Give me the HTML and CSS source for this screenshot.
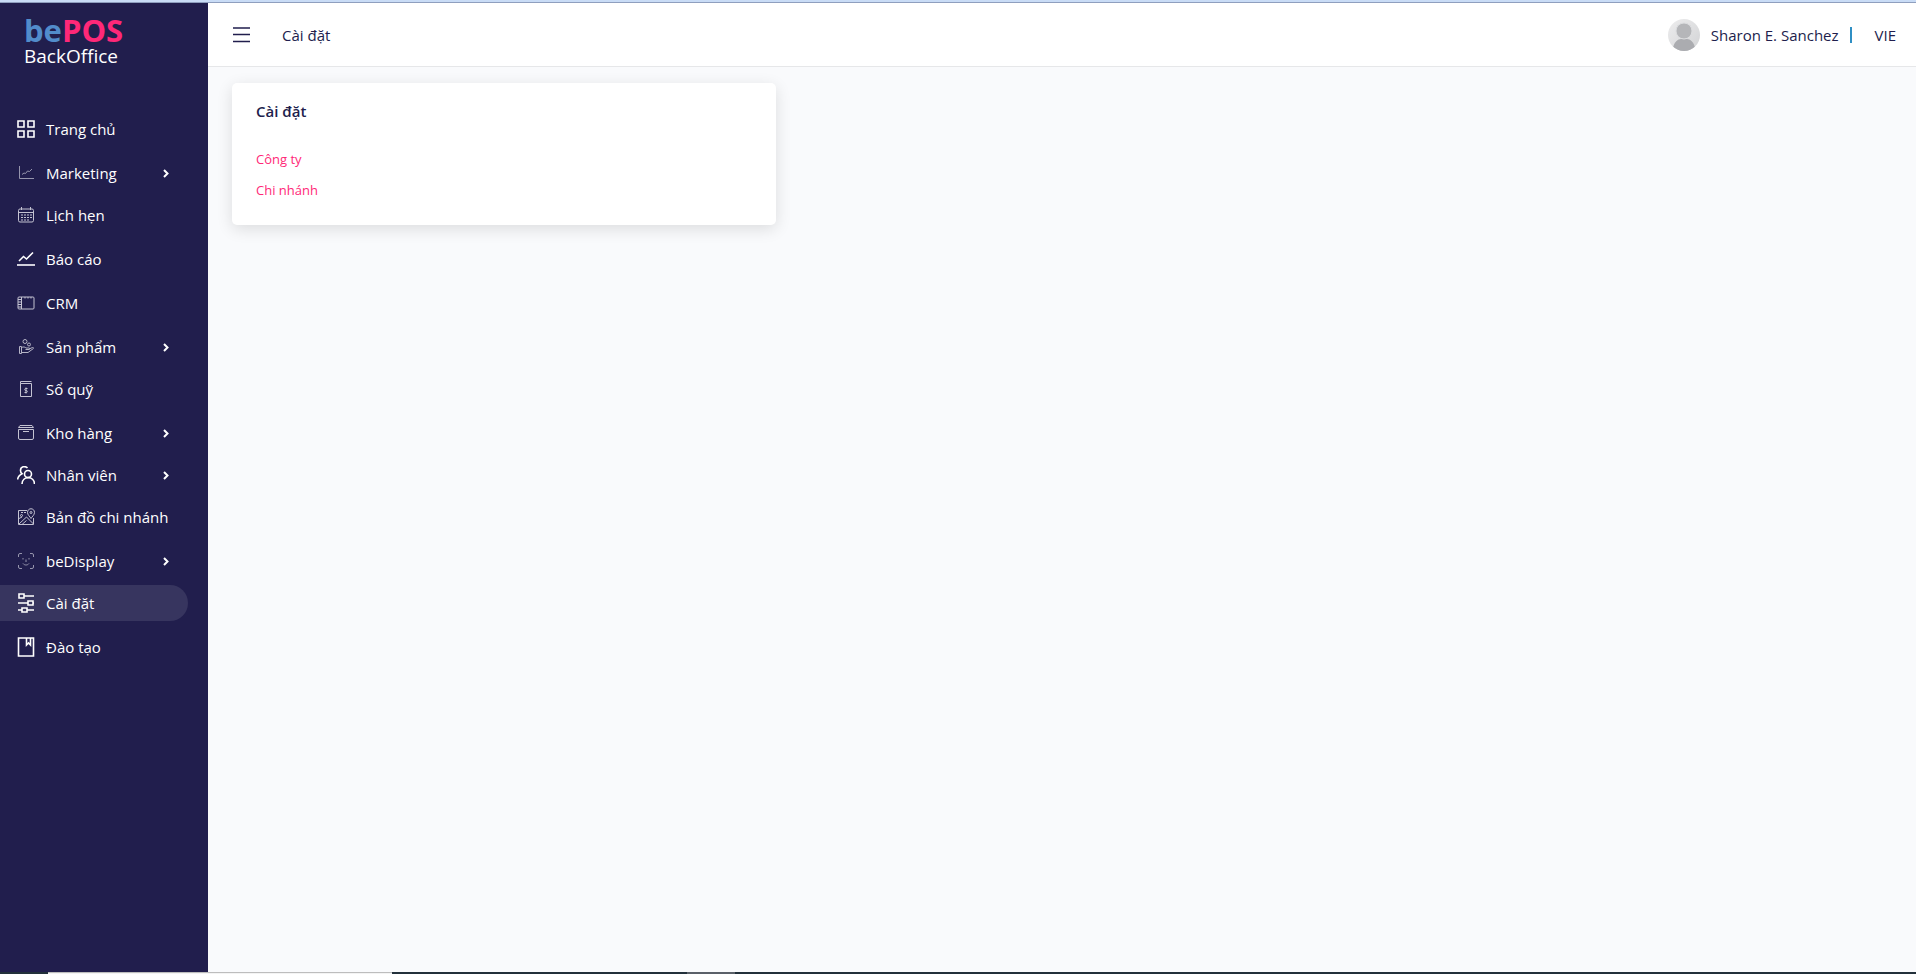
FILE: index.html
```html
<!DOCTYPE html>
<html lang="vi">
  <head>
    <meta charset="UTF-8" />
    <meta name="viewport" content="width=device-width, initial-scale=1.0" />
    <title>bePOS BackOffice</title>
    <link rel="stylesheet" href="styles.css">
  </head>
  <body>
    <div class="top-strip"></div>
    <div class="layout">
      <!-- sidebar -->
      <aside class="sidebar">
        <a class="logo" href="#">
          <span class="logo-name"><span class="logo-be">be</span>POS</span>
          <span class="logo-sub">BackOffice</span>
        </a>
        <nav class="menu">
          <a class="menu-item" href="#">
            <svg class="icon" viewBox="0 0 18 18"><path d="M1 1h6v6H1zM11 1h6v6h-6zM1 11h6v6H1zM11 11h6v6h-6z" /></svg>
            <span>Trang chủ</span>
          </a>
          <button class="menu-item has-sub" type="button">
            <svg class="icon thin" viewBox="0 0 18 18"><path d="M2.5 2v12.5H17M5 10.500l2-1.500 1.500.5 2-2.500 2 .5L15 5" /></svg>
            <span>Marketing</span>
            <svg class="chevron" viewBox="0 0 8 10"><path d="M2 2l3.500 3.500L2 9" /></svg>
          </button>
          <a class="menu-item" href="#">
            <svg class="icon soft" viewBox="0 0 18 18"><path d="M3 3h12q1.500 0 1.500 1.500v10q0 1.500-1.500 1.500H3q-1.500 0-1.500-1.500v-10Q1.500 3 3 3zM1.500 6.500h15M4.500 1v3M13.500 1v3" /><path stroke-dasharray="2 1" d="M4 9h11M4 11.500h11M4 14h8" /></svg>
            <span>Lịch hẹn</span>
          </a>
          <a class="menu-item" href="#">
            <svg class="icon" viewBox="0 0 18 18"><path d="M2 11l4.500-4.500 3 2.500L16 2.500" /><path class="base" d="M0 15h18" /></svg>
            <span>Báo cáo</span>
          </a>
          <a class="menu-item" href="#">
            <svg class="icon soft" viewBox="0 0 18 18"><rect x="1" y="3" width="16" height="12" rx="1" /><path d="M4.500 3v12M1 5.500h3M1 8h3M1 10.500h3M1 13h3M8 3v1.500M11 3v1.500M14 3v1.500" /></svg>
            <span>CRM</span>
          </a>
          <button class="menu-item has-sub" type="button">
            <svg class="icon hand" viewBox="0 0 18 18"><circle cx="8" cy="3.500" r="2" /><circle cx="12" cy="6.500" r="1.500" /><path d="M2.500 8.500h2v7h-2zM4.500 9.500c2-1 3.500-.5 4.500.5h3c1 0 1 1.500 0 1.500H8.500M12 11l3.500-1.500c1-.3 1.500.8.5 1.300L11 14.500H4.500" /></svg>
            <span>Sản phẩm</span>
            <svg class="chevron" viewBox="0 0 8 10"><path d="M2 2l3.500 3.500L2 9" /></svg>
          </button>
          <a class="menu-item" href="#">
            <svg class="icon soft" viewBox="0 0 18 18"><path d="M3.500 3.500h11v13h-11zM3.500 3.500v-2h11" /><path d="M10.500 8.500H8.500c-1 0-1 2 0 2h1c1 0 1 2 0 2h-2M9 7.500v6" /></svg>
            <span>Sổ quỹ</span>
          </a>
          <button class="menu-item has-sub" type="button">
            <svg class="icon soft" viewBox="0 0 18 18"><path d="M3 1.500h12l1.500 2h-15zM1.500 5.500h15V14q0 1.500-1.500 1.500H3q-1.500 0-1.500-1.500zM6 7.500h6" /></svg>
            <span>Kho hàng</span>
            <svg class="chevron" viewBox="0 0 8 10"><path d="M2 2l3.500 3.500L2 9" /></svg>
          </button>
          <button class="menu-item has-sub" type="button">
            <svg class="icon" viewBox="0 0 18 18"><circle cx="11" cy="8" r="3.500" /><path d="M5 18c0-8.500 12.500-8.500 12.500 0M10.500 2C8-.5 3.500.5 3.500 4.500c0 1.500.7 2.500 1.500 3.200C2.500 9 .8 11 .7 13.500" /></svg>
            <span>Nhân viên</span>
            <svg class="chevron" viewBox="0 0 8 10"><path d="M2 2l3.500 3.500L2 9" /></svg>
          </button>
          <a class="menu-item" href="#">
            <svg class="icon soft" viewBox="0 0 18 18"><path d="M10 2.500H1.500v14h15V10M14 10.500c-1-2-3.500-3.500-3.500-6 0-5 7-5 7 0 0 2.500-2.500 4-3.500 6zM2 16l7.500-7 7 7M2 10.500l3-1.500M5 16.500l4.500-4" /><path stroke-dasharray="2 1" d="M4 4.500h5" /><circle cx="14" cy="4.500" r="1" /><circle cx="4.500" cy="7.500" r="1" /></svg>
            <span>Bản đồ chi nhánh</span>
          </a>
          <button class="menu-item has-sub" type="button">
            <svg class="icon thin" viewBox="0 0 18 18"><path d="M1.500 5V3q0-1.500 1.500-1.500h2M13 1.500h2q1.500 0 1.500 1.500v2M16.500 13v2q0 1.500-1.500 1.500h-2M5 16.500H3q-1.500 0-1.500-1.500v-2M6 6v1.500M12 6v1.500M9 7.500v2.500M6 11.500c1.500 2 4.500 2 6 0" /></svg>
            <span>beDisplay</span>
            <svg class="chevron" viewBox="0 0 8 10"><path d="M2 2l3.500 3.500L2 9" /></svg>
          </button>
          <a class="menu-item active" href="#">
            <svg class="icon tall" viewBox="0 0 18 20"><path d="M2 1h5v4H2zM7 3h10M11 8h5v4h-5zM1 10h10M16 10h1M5 15h5v4H5zM1 17h4M10 17h7" /></svg>
            <span>Cài đặt</span>
          </a>
          <a class="menu-item" href="#">
            <svg class="icon tall" viewBox="0 0 18 20"><path d="M1.500 1h15v18h-15zM9.500 1v7l2-2 2 2V1" /></svg>
            <span>Đào tạo</span>
          </a>
        </nav>
      </aside>

      <div class="main">
        <!-- header -->
        <header class="header">
          <button class="toggle" type="button" aria-label="Menu">
            <svg viewBox="0 0 18 18"><path d="M1 2h17M1 8.500h17M1 15.500h17" /></svg>
          </button>
          <h1 class="page-title">Cài đặt</h1>
          <div class="user">
            <svg class="avatar" viewBox="0 0 32 32">
              <defs>
                <linearGradient id="shade" x1="0" y1="0" x2="1" y2="1"><stop offset="0" stop-color="#ededee" /><stop offset="1" stop-color="#d2d3d5" /></linearGradient>
                <clipPath id="round"><circle cx="16" cy="16" r="16" /></clipPath>
              </defs>
              <g clip-path="url(#round)">
                <rect width="32" height="32" fill="url(#shade)" />
                <path fill="#abacb0" d="M5 29c1-6 5-9 8-9h6c3 0 7 3 8 9v3H5z" />
                <circle cx="16" cy="12" r="8" fill="#b5b6b9" stroke="#dcdddf" />
              </g>
            </svg>
            <span class="user-name">Sharon E. Sanchez</span>
            <span class="divider"></span>
            <button class="lang" type="button">VIE</button>
          </div>
        </header>

        <main class="content">
          <section class="card">
            <h2>Cài đặt</h2>
            <a href="#">Công ty</a>
            <a href="#">Chi nhánh</a>
          </section>
        </main>
      </div>
    </div>
    <footer class="taskbar">
      <div class="task-window"></div>
      <div class="task-active"></div>
    </footer>
  </body>
</html>
```
FILE: styles.css
```css
* {
  box-sizing: border-box;
}
body {
  margin: 0;
  min-height: 100vh;
  display: flex;
  flex-direction: column;
  font-family: "Open Sans", "Noto Sans", sans-serif;
  font-size: 15px;
  color: #211e4d;
  background-color: #f9fafc;
}
button {
  border: none;
  padding: 0;
  background: none;
  font: inherit;
  color: inherit;
  cursor: pointer;
}
a {
  text-decoration: none;
}
svg {
  display: block;
  flex: none;
  fill: none;
}
.top-strip {
  height: 3px;
  background-color: #c9dcf6;
  border-bottom: 1px solid #8f9fbe;
}
.layout {
  flex: 1;
  display: flex;
}

/* sidebar */
.sidebar {
  width: 208px;
  flex: none;
  background-color: #211e4d;
  color: white;
}
.logo {
  display: flex;
  flex-direction: column;
  height: 108px;
  padding: 11px 24px 0;
  color: white;
}
.logo-name {
  font-size: 31px;
  line-height: 32px;
  font-weight: 700;
  color: #ff2878;
}
.logo-be {
  color: #528ccb;
}
.logo-sub {
  font-size: 19px;
  line-height: 20px;
}
.menu {
  display: flex;
  flex-direction: column;
}
.menu-item {
  display: flex;
  align-items: center;
  width: 188px;
  height: 36px;
  margin-bottom: 8px;
  padding: 0 18px 0 17px;
  border-radius: 0 18px 18px 0;
  color: white;
  text-align: left;
  white-space: nowrap;
}
.menu-item span {
  flex: 1;
  margin-left: 11px;
}
.has-sub {
  margin-bottom: 6px;
}
.active {
  background-color: #37355f;
}
.icon {
  width: 18px;
  height: 18px;
  stroke: white;
  stroke-width: 1.6;
}
.tall {
  height: 20px;
}
.soft {
  stroke: #c4c3d2;
  stroke-width: 1;
}
.thin {
  stroke: #9695ad;
  stroke-width: 1;
}
.hand {
  stroke: #b5b4c6;
  stroke-width: 1;
}
.base {
  stroke: #d0cfdb;
  stroke-width: 2;
}
.chevron {
  width: 8px;
  height: 10px;
  stroke: white;
  stroke-width: 2;
}

/* header */
.main {
  flex: 1;
  min-width: 0;
}
.header {
  display: flex;
  align-items: center;
  height: 64px;
  padding: 0 20px 0 24px;
  background-color: white;
  border-bottom: 1px solid #e6e7e9;
}
.toggle svg {
  width: 18px;
  height: 18px;
  stroke: #211e4d;
  stroke-width: 1.6;
}
.page-title {
  margin: 0 0 0 32px;
  font-size: 15px;
  font-weight: 400;
}
.user {
  display: flex;
  align-items: center;
  margin-left: auto;
}
.avatar {
  width: 32px;
  height: 32px;
}
.user-name {
  margin: 0 11px;
}
.divider {
  width: 2px;
  height: 16px;
  margin-right: 23px;
  background-color: #2f8fc4;
}

/* content */
.content {
  display: grid;
  grid-template-columns: repeat(3, 1fr);
  gap: 14px;
  padding: 16px 24px;
}
.card {
  display: flex;
  flex-direction: column;
  align-items: flex-start;
  padding: 16px 24px 19px;
  border-radius: 5px;
  background-color: white;
  box-shadow: 0 4px 16px rgba(0, 0, 0, 0.12);
}
.card h2 {
  margin: 0 0 21px;
  font-size: 15px;
  line-height: 24px;
  font-weight: 600;
}
.card a {
  padding: 5px 0;
  margin-bottom: 1px;
  font-size: 13px;
  line-height: 20px;
  color: #ff2878;
}

/* bottom bar */
.taskbar {
  display: flex;
  height: 2px;
  padding-left: 48px;
  background-color: #22303a;
}
.task-window {
  width: 344px;
  border-top: 1px solid #bdbdbd;
  background-color: #f3f3f3;
}
.task-active {
  width: 48px;
  margin-left: 295px;
  background-color: #5a6068;
}
```
